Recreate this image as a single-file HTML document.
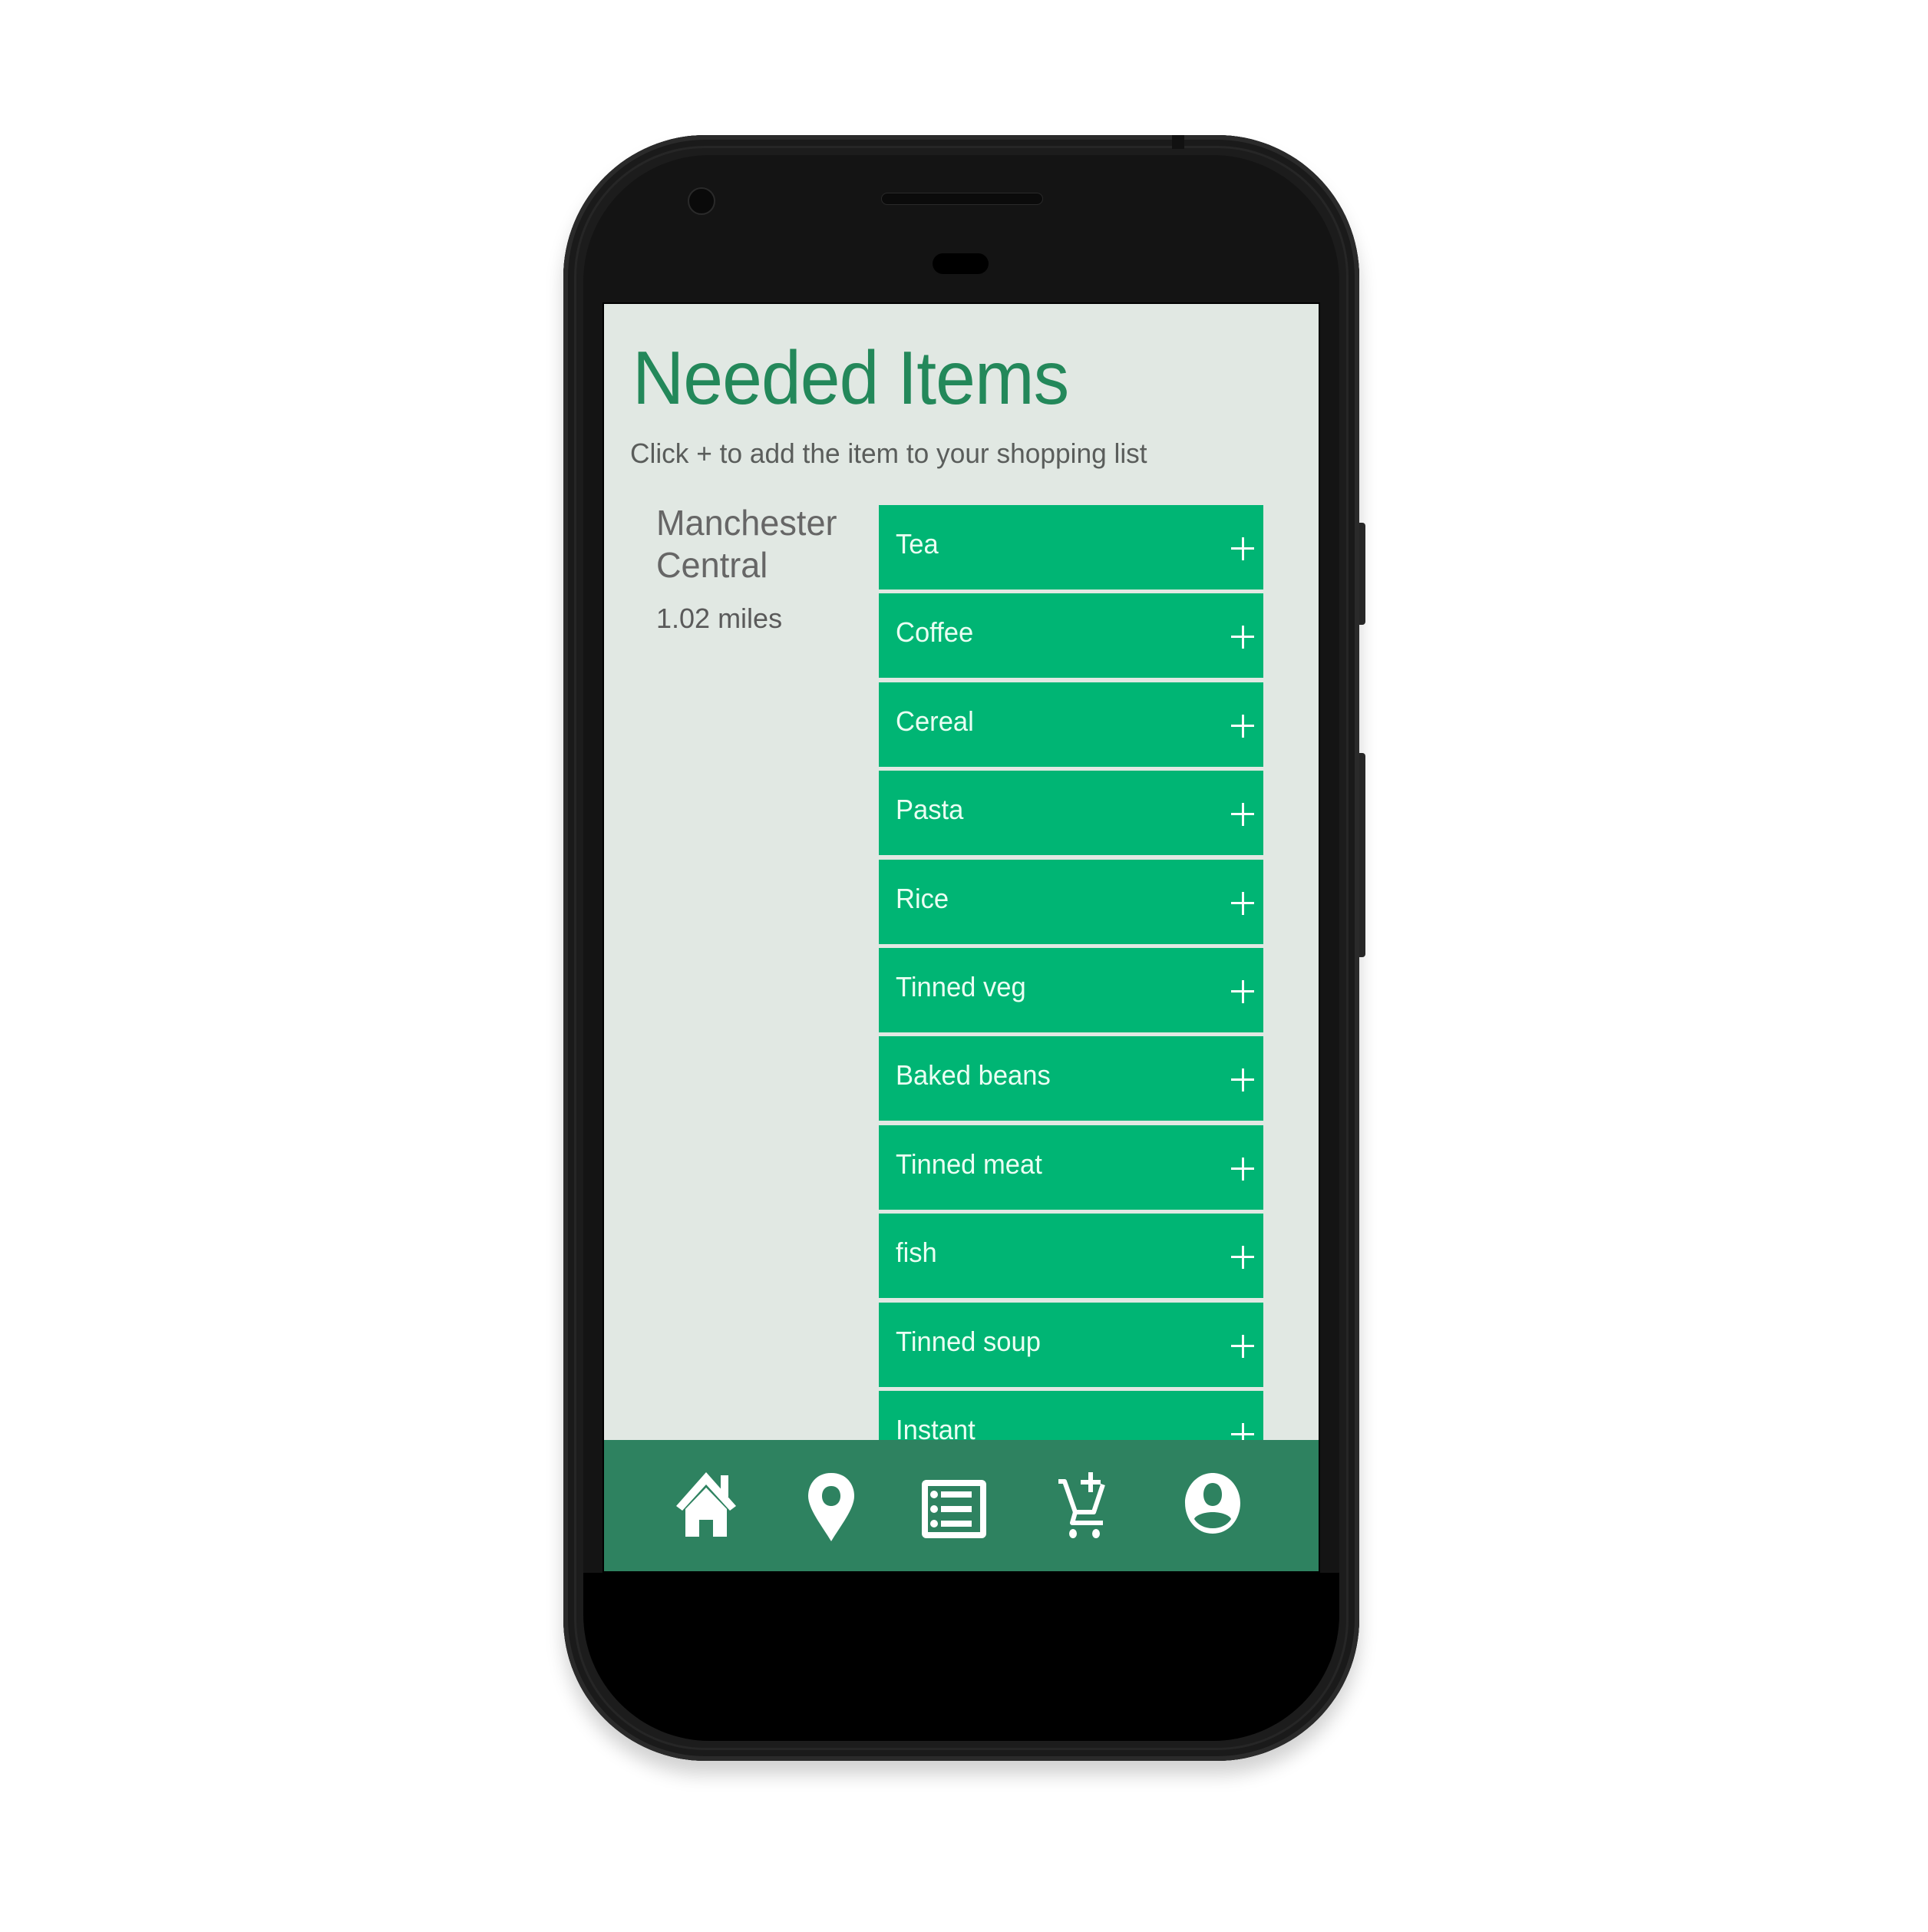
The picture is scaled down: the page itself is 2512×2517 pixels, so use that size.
<!DOCTYPE html>
<html><head><meta charset="utf-8"><style>
html,body{margin:0;padding:0;background:#fff;}
body{width:2512px;height:2517px;position:relative;overflow:hidden;font-family:"Liberation Sans",sans-serif;}
.abs{position:absolute;}
.phone{left:734px;top:176px;width:1037px;height:2118px;background:#1c1c1c;border-radius:185px;box-shadow:0 18px 24px rgba(0,0,0,0.18), inset 0 0 0 6px #2a2a2a, inset 0 0 0 14px #1a1a1a, inset 0 0 0 17px #262626;}
.inner{left:760px;top:202px;width:985px;height:2066px;border-radius:165px;background:#141414;}
.chin{left:760px;top:2049px;width:985px;height:219px;background:#000;border-radius:0 0 165px 165px;}
.screen{left:785px;top:394px;width:935px;height:1655px;background:#e1e8e3;overflow:hidden;border:2px solid #000;box-sizing:border-box;}
.row{position:absolute;left:358px;width:501px;height:110px;background:#00b574;}
.row span{position:absolute;left:22px;top:30px;color:#eafff3;font-size:36px;transform:scaleX(0.96);transform-origin:left;}
.row i{position:absolute;left:459px;top:55px;width:30px;height:3px;background:#fff;}
.row i:after{content:"";position:absolute;left:13.5px;top:-13.5px;width:3px;height:30px;background:#fff;}
.nav{position:absolute;left:0;top:1480px;width:100%;height:175px;background:#2e8260;}
</style></head><body>
<div class="abs" style="left:1768px;top:681px;width:11px;height:133px;background:#2a2a2a;border-radius:0 4px 4px 0"></div>
<div class="abs" style="left:1768px;top:981px;width:11px;height:266px;background:#2a2a2a;border-radius:0 4px 4px 0"></div>
<div class="abs phone"></div>
<div class="abs inner"></div>
<div class="abs chin"></div>
<div class="abs" style="left:1527px;top:176px;width:16px;height:18px;background:#111"></div>
<div class="abs" style="left:1148px;top:251px;width:209px;height:14px;border-radius:8px;background:#0b0b0b;border:1px solid #2a2a2a"></div>
<div class="abs" style="left:896px;top:244px;width:32px;height:32px;border-radius:50%;background:#0a0a0a;border:2px solid #2a2a2a"></div>
<div class="abs" style="left:1215px;top:330px;width:73px;height:27px;border-radius:14px;background:#000"></div>
<div class="abs screen">
  <div class="abs" style="left:37px;top:40px;font-size:98px;color:#23885a;letter-spacing:-1px;transform:scaleX(0.95);transform-origin:left;white-space:nowrap">Needed Items</div>
  <div class="abs" style="left:34px;top:174px;font-size:36px;color:#5a5d5b;white-space:nowrap;transform:scaleX(0.98);transform-origin:left">Click + to add the item to your shopping list</div>
  <div class="abs" style="left:68px;top:258px;font-size:46px;line-height:55px;color:#666;transform:scaleX(0.98);transform-origin:left">Manchester<br>Central</div>
  <div class="abs" style="left:68px;top:389px;font-size:36px;color:#5a5a5a">1.02 miles</div>
  <div class="row" style="top:262px"><span>Tea</span><i></i></div>
  <div class="row" style="top:377px"><span>Coffee</span><i></i></div>
  <div class="row" style="top:493px"><span>Cereal</span><i></i></div>
  <div class="row" style="top:608px"><span>Pasta</span><i></i></div>
  <div class="row" style="top:724px"><span>Rice</span><i></i></div>
  <div class="row" style="top:839px"><span>Tinned veg</span><i></i></div>
  <div class="row" style="top:954px"><span>Baked beans</span><i></i></div>
  <div class="row" style="top:1070px"><span>Tinned meat</span><i></i></div>
  <div class="row" style="top:1185px"><span>fish</span><i></i></div>
  <div class="row" style="top:1301px"><span>Tinned soup</span><i></i></div>
  <div class="row" style="top:1416px"><span>Instant</span><i></i></div>
  <div class="nav">
    <svg style="position:absolute;left:0;top:0" width="935" height="175" viewBox="0 0 935 175">
     <g transform="translate(4,10)">
      <g fill="#fff">
        <path d="M90 76 L129 32 L168 76 L160 82 L129 48 L98 82 Z"/>
        <rect x="148" y="36" width="10" height="28"/>
        <path d="M102 80 L129 52 L156 80 L156 116 L138 116 L138 94 L120 94 L120 116 L102 116 Z"/>
      </g>
      <path fill="#fff" fill-rule="evenodd" d="M292 33 C272 33 262 48 262 63 C262 80 280 102 292 122 C304 102 322 80 322 63 C322 48 312 33 292 33 Z M292 50 C284 50 280 56 280 63 C280 71 285 76 292 76 C299 76 304 71 304 63 C304 56 300 50 292 50 Z"/>
      <g fill="#fff">
        <path fill-rule="evenodd" d="M416 42 h72 a6 6 0 0 1 6 6 v64 a6 6 0 0 1 -6 6 h-72 a6 6 0 0 1 -6 -6 v-64 a6 6 0 0 1 6 -6 Z M418 50 v60 h68 v-60 Z"/>
        <circle cx="426" cy="61" r="5"/><circle cx="426" cy="80" r="5"/><circle cx="426" cy="99" r="5"/>
        <rect x="435" y="57" width="40" height="8"/><rect x="435" y="76" width="40" height="8"/><rect x="435" y="95" width="40" height="8"/>
      </g>
      <g fill="none" stroke="#fff" stroke-width="6" stroke-linejoin="round">
        <path d="M588 44 h8 l14 40 h24 l12 -36"/>
        <path d="M610 84 l-4 14 h40"/>
      </g>
      <g fill="#fff">
        <rect x="617" y="42" width="26" height="6"/><rect x="627" y="32" width="6" height="26"/>
        <ellipse cx="607" cy="112" rx="5" ry="6"/><ellipse cx="637" cy="112" rx="5" ry="6"/>
      </g>
      <path fill="#fff" fill-rule="evenodd" d="M789 33 C768 33 753 52 753 72 C753 94 768 112 789 112 C810 112 825 94 825 72 C825 52 810 33 789 33 Z M789 46 C781 46 777 53 777 61 C777 69 781 76 789 76 C797 76 801 69 801 61 C801 53 797 46 789 46 Z M789 84 C776 84 766 89 765 93 C770 101 779 105 789 105 C799 105 808 101 813 93 C812 89 802 84 789 84 Z"/>
     </g>
    </svg>
  </div>
</div>
</body></html>
